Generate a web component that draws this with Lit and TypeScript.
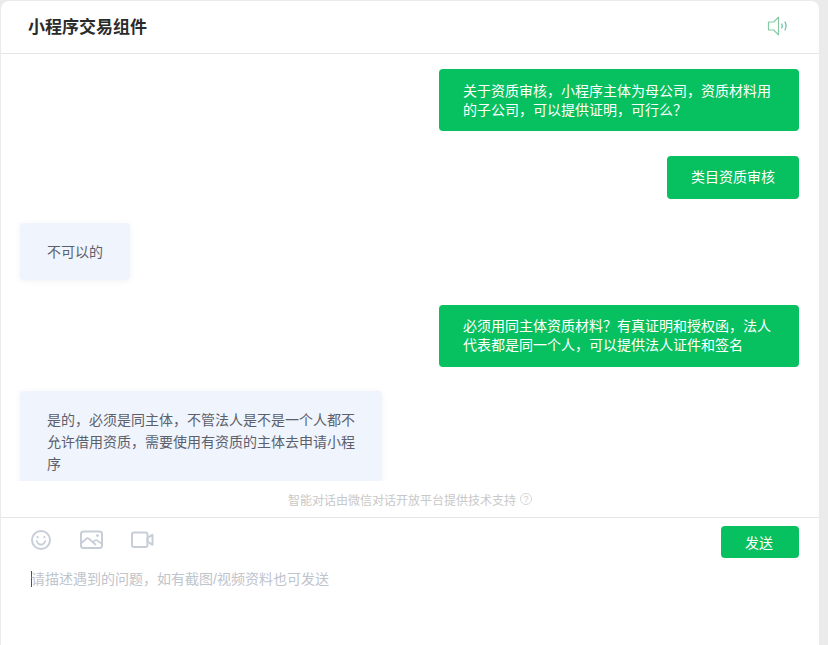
import { LitElement, html, css, svg } from 'lit';
import { customElement } from 'lit/decorators.js';

type Msg = { from: 'me' | 'bot'; text: string };

const messages: Msg[] = [
  { from: 'me', text: '关于资质审核，小程序主体为母公司，资质材料用的子公司，可以提供证明，可行么？' },
  { from: 'me', text: '类目资质审核' },
  { from: 'bot', text: '不可以的' },
  { from: 'me', text: '必须用同主体资质材料？有真证明和授权函，法人代表都是同一个人，可以提供法人证件和签名' },
  { from: 'bot', text: '是的，必须是同主体，不管法人是不是一个人都不允许借用资质，需要使用有资质的主体去申请小程序' },
];

const speakerIcon = svg`
  <svg class="speaker" width="22" height="20" viewBox="0 0 22 20" fill="none" stroke="#85c9a4" stroke-width="1.2">
    <path d="M1.5 6h5.2L11.5 1.2v17.6L6.7 14H1.500z" stroke-linejoin="round" />
    <path d="M14.6 7.6c.9 1.5.9 3.3 0 4.8" stroke="#5fc4a4" />
    <path d="M17.8 5.6c1.6 2.800 1.6 6 0 8.800" stroke="#5fc4a4" />
  </svg>`;

const smileIcon = svg`
  <svg width="22" height="22" viewBox="0 0 22 22" fill="none" stroke="#c8ced8" stroke-width="2">
    <circle cx="11" cy="11" r="9" />
    <path d="M6.600 12c1 2.500 2.600 3.700 4.400 3.700s3.400-1.200 4.400-3.700" stroke-linecap="round" stroke-width="1.700" />
    <circle cx="7.600" cy="8.200" r="1.100" fill="#c8ced8" stroke="none" />
    <circle cx="14.400" cy="8.200" r="1.100" fill="#c8ced8" stroke="none" />
  </svg>`;

const imageIcon = svg`
  <svg width="24" height="20" viewBox="0 0 24 20" fill="none" stroke="#c8ced8" stroke-width="2">
    <rect x="2" y="1.500" width="21" height="16.500" rx="2.500" />
    <path d="M2.500 13l5-4.500c.7-.6 1.500-.6 2.200 0l7.300 6.500" stroke-width="1.700" />
    <path d="M14 12l2.200-1.600c.6-.4 1.300-.4 1.900 0l4.400 3.200" stroke-width="1.700" />
    <circle cx="18.500" cy="5.600" r="1.400" fill="#c8ced8" stroke="none" />
  </svg>`;

const videoIcon = svg`
  <svg width="24" height="18" viewBox="0 0 24 18" fill="none" stroke="#c8ced8" stroke-width="2">
    <rect x="2" y="1.500" width="15.500" height="14.500" rx="2" />
    <path d="M17.500 7l5-3.300v10.100l-5-3.300z" stroke-linejoin="round" />
  </svg>`;

@customElement('app-root')
export class AppRoot extends LitElement {
  static styles = css`
    :host {
      display: block;
      height: 645px;
      overflow: hidden;
      padding: 1px 9px 0 1px;
      box-sizing: border-box;
      background: #ebebeb;
      font-family: 'Liberation Sans', 'Noto Sans CJK SC', sans-serif;
    }

    .card {
      display: flex;
      flex-direction: column;
      height: 100%;
      background: #fff;
      border-radius: 8px 8px 0 0;
    }

    .header {
      display: flex;
      align-items: center;
      justify-content: space-between;
      flex: none;
      height: 53px;
      box-sizing: border-box;
      padding: 0 30px 2px 27px;
      border-bottom: 1px solid #e6e6ea;
    }

    .title {
      margin-bottom: 2px;
      font-size: 17px;
      font-weight: 700;
      color: #2b2b2b;
    }

    .speaker {
      display: block;
    }

    .messages {
      flex: none;
      height: 427px;
      overflow: hidden;
      padding: 15px 20px 0 19px;
      box-sizing: border-box;
      display: flex;
      flex-direction: column;
      gap: 24.5px;
    }

    .bubble {
      flex: none;
      font-size: 14px;
      border-radius: 4px;
      box-sizing: border-box;
    }

    .me {
      align-self: flex-end;
      max-width: 360px;
      padding: 12.5px 24px 11.5px;
      line-height: 19px;
      color: #fff;
      background: #07c160;
    }

    .bot {
      align-self: flex-start;
      max-width: 362px;
      padding: 17.5px 27px;
      line-height: 22px;
      color: #5c606b;
      background: #f0f4fc;
      box-shadow: 0 1px 6px rgba(0, 0, 0, 0.06);
    }

    .note {
      flex: none;
      display: flex;
      align-items: center;
      justify-content: center;
      gap: 4px;
      height: 37px;
      box-sizing: border-box;
      border-bottom: 1px solid #e6e6ea;
      font-size: 12px;
      color: #c8c8c8;
    }

    .help {
      width: 10px;
      height: 10px;
      border: 1px solid #d8d8d8;
      border-radius: 50%;
      font-size: 9px;
      line-height: 10px;
      text-align: center;
      color: #cccccc;
    }

    .toolbar {
      flex: none;
      display: flex;
      align-items: center;
      margin-top: 8px;
      padding: 0 20px 0 29px;
    }

    .tools {
      display: flex;
      align-items: center;
      gap: 27px;
      flex: 1;
      padding-bottom: 4px;
    }

    .tools svg {
      display: block;
    }

    .send {
      width: 78px;
      height: 32px;
      padding: 0 2px 0 0;
      border: 0;
      border-radius: 4px;
      background: #07c160;
      color: #fff;
      font: inherit;
      font-size: 14px;
    }

    .input {
      margin: 13px 0 0 30px;
      border-left: 1px solid #555;
      width: max-content;
      height: 16px;
      line-height: 16px;
      text-indent: -1px;
      font-size: 14px;
      color: #c0c4cc;
    }
  `;

  render() {
    return html`
      <div class="card">
        <div class="header">
          <div class="title">小程序交易组件</div>
          ${speakerIcon}
        </div>
        <div class="messages">
          ${messages.map((m) => html`<div class="bubble ${m.from}">${m.text}</div>`)}
        </div>
        <div class="note">
          <span>智能对话由微信对话开放平台提供技术支持</span>
          <span class="help">?</span>
        </div>
        <div class="toolbar">
          <div class="tools">${smileIcon}${imageIcon}${videoIcon}</div>
          <button class="send">发送</button>
        </div>
        <div class="input">请描述遇到的问题，如有截图/视频资料也可发送</div>
      </div>
    `;
  }
}
